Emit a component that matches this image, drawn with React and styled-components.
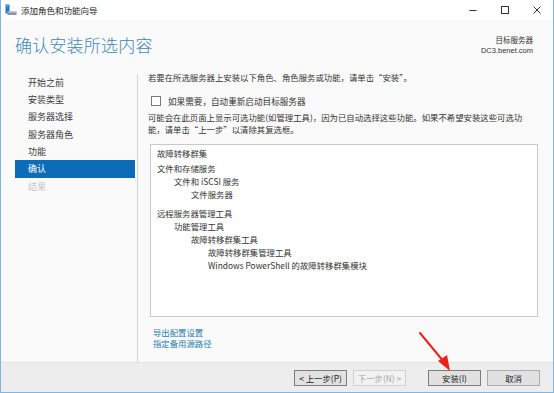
import styled, { createGlobalStyle } from 'styled-components'

const GlobalStyle = createGlobalStyle`
  html, body {
    margin: 0;
    padding: 0;
    background: #ffffff;
  }
  body {
    font-family: "Noto Sans CJK SC", "Noto Sans", "Liberation Sans", sans-serif;
    color: #333333;
  }
`;

const Window = styled.div`
  position: relative;
  box-sizing: border-box;
  width: 554px;
  height: 393px;
  display: flex;
  flex-direction: column;
  background: #fafafa;
  border: 1px solid #7fb6e4;
  border-top: none;
  overflow: hidden;
`;

const TitleBar = styled.div`
  display: flex;
  align-items: center;
  height: 20px;
  background: #ffffff;
  padding-left: 4px;
  font-size: 8.5px;
  color: #222;
`;

const TitleText = styled.span`
  margin-left: 4px;
  flex: 1;
`;

const Controls = styled.div`
  display: flex;
  height: 100%;
`;

const ControlBtn = styled.div`
  width: 32px;
  display: flex;
  align-items: center;
  justify-content: center;
`;

const Header = styled.div`
  display: flex;
  align-items: center;
  justify-content: space-between;
  height: 48px;
  padding: 0 20px 0 14px;
`;

const Heading = styled.h1`
  margin: 0;
  font-size: 17px;
  font-weight: 300;
  color: #3f88b7;
  letter-spacing: 0.2px;
`;

const Target = styled.div`
  align-self: flex-start;
  margin-top: 16px;
  text-align: right;
  font-size: 7.5px;
  line-height: 10px;
  color: #333;
  font-family: "Liberation Sans", "Noto Sans CJK SC", sans-serif;
`;

const Body = styled.div`
  flex: 1;
  display: flex;
  min-height: 0;
`;

const Nav = styled.div`
  box-sizing: border-box;
  width: 137px;
  margin-top: 6px;
  padding-left: 14px;
  border-right: 1px solid #d6d6d6;
`;

const NavItem = styled.div`
  width: 120px;
  height: 17.4px;
  line-height: 17.4px;
  padding-left: 13px;
  box-sizing: border-box;
  font-size: 9px;
  color: ${p => (p.$active ? '#ffffff' : p.$disabled ? '#c4c4c4' : '#3a3a3a')};
  background: ${p => (p.$active ? '#0b6cb8' : 'transparent')};
  &:first-child {
    margin-top: -0.5px;
  }
`;

const Content = styled.div`
  flex: 1;
  padding: 3px 15px 0 10px;
  font-size: 8.4px;
  color: #333;
`;

const Line = styled.div`
  line-height: 12px;
  white-space: nowrap;
`;

const CheckRow = styled.label`
  display: flex;
  align-items: center;
  gap: 7px;
  margin-top: 12px;
  height: 12px;
  padding-left: 3px;
  font-size: 8.6px;
`;

const CheckBox = styled.span`
  width: 8px;
  height: 8px;
  border: 1px solid #7a7a7a;
  background: #fff;
`;

const Note = styled.div`
  margin-top: 4px;
  line-height: 12px;
`;

const Panel = styled.div`
  box-sizing: border-box;
  margin: 9px 0 0 2px;
  height: 173px;
  border: 1px solid #c9c9c9;
  background: #ffffff;
  padding: 2px 0 0 6px;
`;

const Group = styled.div`
  margin-bottom: ${p => p.$gap || 0}px;
`;

const TreeLine = styled.div`
  line-height: 13px;
  padding-left: ${p => p.$level * 17}px;
  white-space: nowrap;
`;

const Links = styled.div`
  margin-top: 10px;
  padding-left: 5px;
  line-height: 11px;
  color: #2a7db0;
`;

const Footer = styled.div`
  height: 30px;
  box-sizing: border-box;
  background: #ededed;
  border-top: 1px solid #e2e2e2;
  display: flex;
  justify-content: flex-end;
  align-items: flex-start;
  padding: 7px 13px 0 0;
`;

const Button = styled.div`
  box-sizing: border-box;
  width: 53px;
  height: 16px;
  display: flex;
  align-items: center;
  justify-content: center;
  font-size: 8.4px;
  background: ${p => (p.$disabled ? '#f2f2f2' : '#e1e1e1')};
  border: 1px solid ${p => (p.$disabled ? '#d2d2d2' : p.$strong ? '#7d7d7d' : '#adadad')};
  color: ${p => (p.$disabled ? '#a6a6a6' : '#222')};
  margin-left: ${p => p.$gap || 6}px;
`;

const Arrow = styled.svg`
  position: absolute;
  left: 0;
  top: 0;
  pointer-events: none;
`;

const navItems = ['开始之前', '安装类型', '服务器选择', '服务器角色', '功能', '确认', '结果'];

const tree = [
  { gap: 2, rows: [[0, '故障转移群集']] },
  { gap: 6, rows: [[0, '文件和存储服务'], [1, '文件和 iSCSI 服务'], [2, '文件服务器']] },
  {
    gap: 0,
    rows: [
      [0, '远程服务器管理工具'],
      [1, '功能管理工具'],
      [2, '故障转移群集工具'],
      [3, '故障转移群集管理工具'],
      [3, 'Windows PowerShell 的故障转移群集模块'],
    ],
  },
];

function AppIcon() {
  return (
    <svg width="12" height="12" viewBox="0 0 12 12">
      <rect x="0.5" y="0.5" width="4" height="9" fill="#1f78c8" />
      <rect x="1.5" y="1.5" width="2" height="1" fill="#8fc3ee" />
      <rect x="2.5" y="7.5" width="9" height="3.5" fill="#8995a3" />
      <rect x="2.5" y="7.5" width="9" height="1" fill="#c7ced7" />
    </svg>
  );
}

export default function App() {
  return (
    <>
      <GlobalStyle />
      <Window>
        <TitleBar>
          <AppIcon />
          <TitleText>添加角色和功能向导</TitleText>
          <Controls>
            <ControlBtn>
              <svg width="10" height="10" viewBox="0 0 10 10">
                <line x1="1.5" y1="5.5" x2="8.5" y2="5.5" stroke="#333" strokeWidth="1" />
              </svg>
            </ControlBtn>
            <ControlBtn>
              <svg width="10" height="10" viewBox="0 0 10 10">
                <rect x="1.5" y="1.5" width="7" height="7" fill="none" stroke="#333" strokeWidth="1" />
              </svg>
            </ControlBtn>
            <ControlBtn>
              <svg width="10" height="10" viewBox="0 0 10 10">
                <path d="M1.5 1.5 L8.5 8.5 M8.5 1.5 L1.5 8.5" stroke="#333" strokeWidth="1" />
              </svg>
            </ControlBtn>
          </Controls>
        </TitleBar>

        <Header>
          <Heading>确认安装所选内容</Heading>
          <Target>
            <div>目标服务器</div>
            <div>DC3.benet.com</div>
          </Target>
        </Header>

        <Body>
          <Nav>
            {navItems.map(item => (
              <NavItem key={item} $active={item === '确认'} $disabled={item === '结果'}>
                {item}
              </NavItem>
            ))}
          </Nav>
          <Content>
            <Line>若要在所选服务器上安装以下角色、角色服务或功能，请单击“安装”。</Line>
            <CheckRow>
              <CheckBox />
              如果需要，自动重新启动目标服务器
            </CheckRow>
            <Note>
              可能会在此页面上显示可选功能(如管理工具)，因为已自动选择这些功能。如果不希望安装这些可选功
              <br />
              能，请单击“上一步”以清除其复选框。
            </Note>
            <Panel>
              {tree.map((g, i) => (
                <Group key={i} $gap={g.gap}>
                  {g.rows.map(([level, text]) => (
                    <TreeLine key={text} $level={level}>{text}</TreeLine>
                  ))}
                </Group>
              ))}
            </Panel>
            <Links>
              <div>导出配置设置</div>
              <div>指定备用源路径</div>
            </Links>
          </Content>
        </Body>

        <Footer>
          <Button $strong>&lt; 上一步(P)</Button>
          <Button $disabled>下一步(N) &gt;</Button>
          <Button $gap={22} $strong>安装(I)</Button>
          <Button>取消</Button>
        </Footer>

        <Arrow width="554" height="393" viewBox="0 0 554 393">
          <line x1="419" y1="333" x2="443" y2="362" stroke="#e8231c" strokeWidth="2" strokeLinecap="round" />
          <polygon points="449,371 437,361 446,355" fill="#e8231c" />
        </Arrow>
      </Window>
    </>
  );
}
